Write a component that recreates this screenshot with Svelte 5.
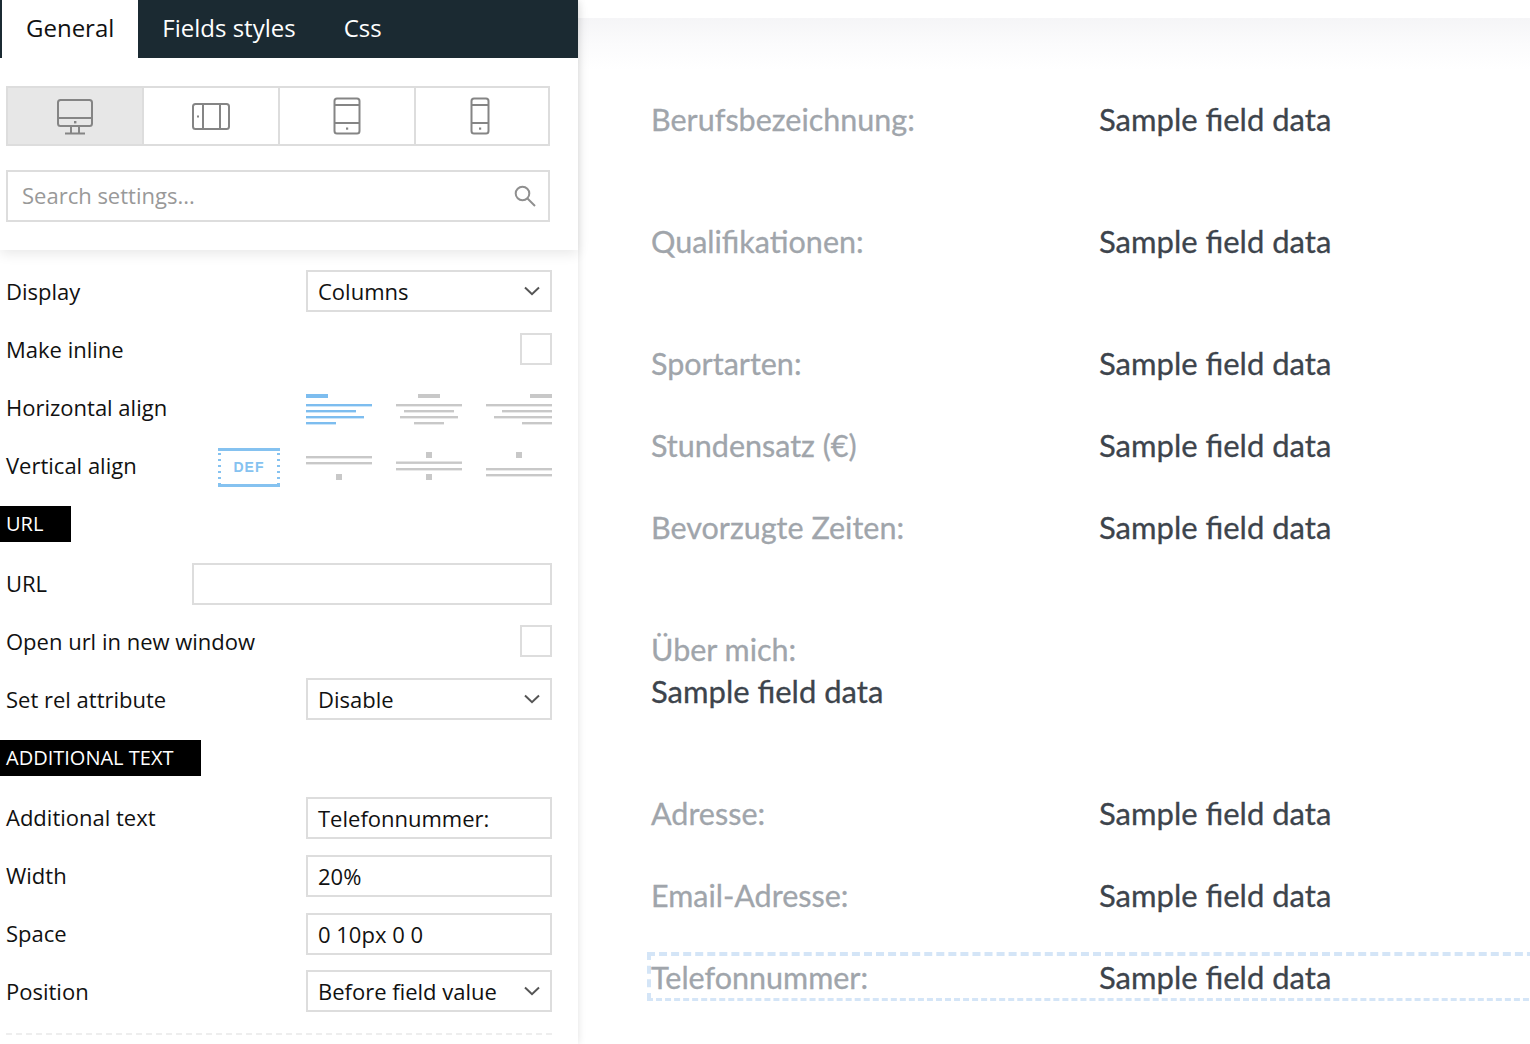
<script>
  const rows = [
    { label: 'Berufsbezeichnung:', value: 'Sample field data', tall: true },
    { label: 'Qualifikationen:', value: 'Sample field data', tall: true },
    { label: 'Sportarten:', value: 'Sample field data' },
    { label: 'Stundensatz (€)', value: 'Sample field data' },
    { label: 'Bevorzugte Zeiten:', value: 'Sample field data', tall: true }
  ];
  const rows2 = [
    { label: 'Adresse:', value: 'Sample field data' },
    { label: 'Email-Adresse:', value: 'Sample field data' }
  ];
  function offs(w, mode) {
    return mode === 'l' ? 0 : mode === 'c' ? (66 - w) / 2 : 66 - w;
  }
</script>

{#snippet chevron()}
  <svg class="chev" width="16" height="10" viewBox="0 0 16 10"><path d="M1 1.5 8 8.2 15 1.5" fill="none" stroke="#555" stroke-width="2"/></svg>
{/snippet}

{#snippet halign(mode, color)}
  <svg width="66" height="34" viewBox="0 0 66 34">
    <rect x={offs(22, mode)} y="3" width="22" height="4" fill={color}/>
    {#each [66, 50, 58, 30] as w, i}
      <rect x={offs(w, mode)} y={13 + i * 6} width={w} height="2.4" fill={color}/>
    {/each}
  </svg>
{/snippet}

<div class="page">
  <aside class="panel">
    <div class="head">
      <nav class="tabs">
        <span class="tab active">General</span>
        <span class="tab">Fields styles</span>
        <span class="tab">Css</span>
      </nav>
      <div class="devices">
        <div class="dev on">
          <svg width="38" height="37" viewBox="0 0 38 37" fill="none" stroke="#858585" stroke-width="2">
            <rect x="2" y="2" width="34" height="26" rx="2.5"/>
            <path d="M2 20H36M15 28V35M23 28V35M9 35.5H29"/>
            <rect x="18" y="23" width="2.4" height="2.4" fill="#858585" stroke="none"/>
          </svg>
        </div>
        <div class="dev">
          <svg width="40" height="29" viewBox="0 0 40 29" fill="none" stroke="#858585" stroke-width="2">
            <rect x="2" y="2" width="36" height="25" rx="2.5"/>
            <path d="M12 2V27M29 2V27"/>
            <rect x="6" y="13.5" width="2" height="2" fill="#858585" stroke="none"/>
          </svg>
        </div>
        <div class="dev">
          <svg width="28" height="38" viewBox="0 0 28 38" fill="none" stroke="#858585" stroke-width="2">
            <rect x="1.5" y="1.5" width="25" height="35" rx="2.5"/>
            <path d="M1.5 8H26.5M1.5 26H26.5"/>
            <rect x="13" y="30.5" width="2.2" height="2.2" fill="#858585" stroke="none"/>
          </svg>
        </div>
        <div class="dev last">
          <svg width="20" height="38" viewBox="0 0 20 38" fill="none" stroke="#858585" stroke-width="2">
            <rect x="1.5" y="1.5" width="17" height="35" rx="2.5"/>
            <path d="M1.5 8H18.5M1.5 26H18.5"/>
            <rect x="9" y="30.5" width="2.2" height="2.2" fill="#858585" stroke="none"/>
          </svg>
        </div>
      </div>
      <div class="search">
        <span class="ph">Search settings...</span>
        <svg width="24" height="24" viewBox="0 0 24 24" fill="none" stroke="#8f8f8f" stroke-width="2"><circle cx="9.5" cy="9.5" r="6.8"/><path d="M14.5 14.5 22 22"/></svg>
      </div>
    </div>

    <div class="body">
      <div class="row"><span>Display</span><div class="ctl sel"><span>Columns</span>{@render chevron()}</div></div>
      <div class="row"><span>Make inline</span><div class="check"></div></div>
      <div class="row">
        <span>Horizontal align</span>
        <div class="aligns">
          {@render halign('l', '#7dbdef')}
          {@render halign('c', '#c8c8c8')}
          {@render halign('r', '#c8c8c8')}
        </div>
      </div>
      <div class="row">
        <span>Vertical align</span>
        <div class="aligns">
          <div class="def">DEF</div>
          <svg width="66" height="32" viewBox="0 0 66 32" fill="#c8c8c8">
            <rect y="6" width="66" height="2.4"/><rect y="12" width="66" height="2.4"/><rect x="30" y="24" width="6" height="6"/>
          </svg>
          <svg width="66" height="32" viewBox="0 0 66 32" fill="#c8c8c8">
            <rect x="30" y="2" width="6" height="6"/><rect y="11.5" width="66" height="2.4"/><rect y="18" width="66" height="2.4"/><rect x="30" y="24" width="6" height="6"/>
          </svg>
          <svg width="66" height="32" viewBox="0 0 66 32" fill="#c8c8c8">
            <rect x="30" y="2" width="6" height="6"/><rect y="18" width="66" height="2.4"/><rect y="24" width="66" height="2.4"/>
          </svg>
        </div>
      </div>

      <div class="section">URL</div>
      <div class="row"><span>URL</span><div class="ctl wide"></div></div>
      <div class="row"><span>Open url in new window</span><div class="check"></div></div>
      <div class="row"><span>Set rel attribute</span><div class="ctl sel"><span>Disable</span>{@render chevron()}</div></div>

      <div class="section">ADDITIONAL TEXT</div>
      <div class="row"><span>Additional text</span><div class="ctl">Telefonnummer:</div></div>
      <div class="row"><span>Width</span><div class="ctl">20%</div></div>
      <div class="row"><span>Space</span><div class="ctl">0 10px 0 0</div></div>
      <div class="row"><span>Position</span><div class="ctl sel"><span>Before field value</span>{@render chevron()}</div></div>
      <div class="rule"></div>
    </div>
  </aside>

  <main class="preview">
    <div class="fade"></div>
    <div class="fields">
      {#each rows as r}
        <div class="field" class:tall={r.tall}><span class="lab">{r.label}</span><span class="val">{r.value}</span></div>
      {/each}
      <div class="lab stack">Über mich:</div>
      <div class="val stack tall">Sample field data</div>
      {#each rows2 as r}
        <div class="field"><span class="lab">{r.label}</span><span class="val">{r.value}</span></div>
      {/each}
      <div class="field picked"><span class="lab">Telefonnummer:</span><span class="val">Sample field data</span></div>
    </div>
  </main>
</div>

<style>
  :global(body) { margin: 0; background: #fff; overflow: hidden; }
  .page { display: flex; width: 1530px; height: 1044px; overflow: hidden; font-family: "Open Sans", sans-serif; color: #111; }
  .panel { width: 578px; flex: none; position: relative; z-index: 2; background: #fff; box-shadow: 0 0 8px rgba(0,0,0,.12); font-size: 22px; }
  .head { height: 250px; box-shadow: 0 4px 12px rgba(0,0,0,.09); }
  .tabs { display: flex; height: 58px; background: #1b2a32; padding-left: 2px; }
  .tab { padding: 0 24px; line-height: 55px; font-size: 24px; color: #fff; }
  .tab.active { background: #fff; color: #111; }
  .devices { display: flex; margin: 28px 0 0 6px; width: 544px; height: 60px; box-sizing: border-box; border: 2px solid #ddd; }
  .dev { flex: 0 0 136px; box-sizing: border-box; display: flex; align-items: center; justify-content: center; border-right: 2px solid #ddd; }
  .dev.last { flex: 1; border-right: 0; padding-right: 4px; }
  .dev.on { background: #e7e7e7; }
  .search { display: flex; align-items: center; justify-content: space-between; margin: 24px 0 0 6px; width: 544px; height: 52px; box-sizing: border-box; border: 2px solid #ddd; padding: 0 11px 0 14px; }
  .ph { color: #999; padding-bottom: 2px; }
  .body { padding: 13px 26px 0 6px; }
  .row { display: flex; align-items: center; justify-content: space-between; height: 58px; line-height: 30px; }
  .row > span { padding-bottom: 2px; }
  .ctl { width: 246px; height: 42px; box-sizing: border-box; border: 2px solid #ddd; padding: 0 10px; line-height: 38px; background: #fff; }
  .ctl.wide { width: 360px; }
  .sel { display: flex; align-items: center; justify-content: space-between; margin-top: -2px; }
  .chev { flex: none; }
  .check { width: 32px; height: 32px; box-sizing: border-box; border: 2px solid #ddd; margin-top: -2px; }
  .aligns { display: flex; align-items: center; gap: 24px; }
  .def { width: 62px; height: 39px; box-sizing: border-box; margin: 2px 2px 0 0; border-top: 3px solid #85c2f0; border-bottom: 3px solid #85c2f0; display: flex; align-items: center; justify-content: center; color: #85c2f0; font: 700 14px/1 "Liberation Sans", sans-serif; letter-spacing: 1px; background-image: radial-gradient(circle, #85c2f0 1.2px, transparent 1.3px), radial-gradient(circle, #85c2f0 1.2px, transparent 1.3px); background-size: 3px 6px; background-repeat: repeat-y; background-position: 0 0, 100% 0; }
  .section { margin: 11px 0 13px -6px; width: fit-content; height: 36px; line-height: 36px; padding: 0 28px 0 6px; background: #000; color: #fff; font-size: 20px; }
  .rule { margin-top: 12px; border-top: 2px dashed #eee; }

  .preview { flex: 1; min-width: 0; padding-top: 18px; font-family: Lato, sans-serif; font-size: 30.5px; }
  .fade { height: 52px; background: linear-gradient(#f5f5f7, #fbfbfc 50%, #fff); }
  .fields { padding: 29px 0 0 73px; }
  .field { display: flex; height: 42px; line-height: 40px; margin-bottom: 40px; }
  .field.tall, .stack.tall { margin-bottom: 80px; }
  .stack { height: 42px; line-height: 40px; }
  .lab { width: 448px; flex: none; color: #a0a5ab; -webkit-text-stroke: .3px #a0a5ab; }
  .val { color: #3d444c; font-size: 31px; -webkit-text-stroke: .3px #3d444c; }
  .picked { width: 900px; height: 49px; box-sizing: border-box; margin: -5px 0 0 -4px; border: 3px dashed #d4e5f7; border-width: 4px 4px 3px 4px; padding: 1px 0 0 0; }
</style>
